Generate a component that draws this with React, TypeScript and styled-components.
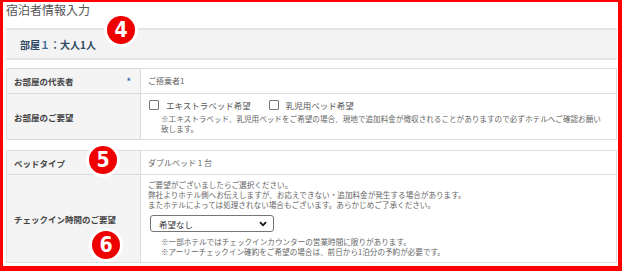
import React from 'react';
import styled, { createGlobalStyle } from 'styled-components';

const GlobalStyle = createGlobalStyle`
  html, body {
    margin: 0;
    padding: 0;
    background: #ffffff;
  }
  body {
    font-family: "Noto Sans CJK JP", "Noto Sans", sans-serif;
  }
`;

const Frame = styled.div`
  position: relative;
  box-sizing: border-box;
  width: 622px;
  height: 271px;
  border-style: solid;
  border-color: #ff0000;
  border-width: 2px 4px 5px 3px;
  padding: 1px 1px 0 3px;
  background: #ffffff;
  overflow: hidden;
`;

const Title = styled.div`
  font-size: 12px;
  line-height: 14px;
  color: #555555;
  margin-bottom: 11px;
`;

const RoomHeader = styled.div`
  box-sizing: border-box;
  height: 32px;
  display: flex;
  align-items: center;
  padding-left: 14px;
  background: #f3f3f3;
  border-top: 2px solid #e5e5e5;
  border-bottom: 2px solid #e5e5e5;
  font-size: 10px;
  font-weight: 700;
  color: #2f4a63;
`;

const RoomNo = styled.span`
  color: #3d6f9c;
`;

const Table = styled.div<{ $gap: number }>`
  margin-top: ${(p) => p.$gap}px;
  display: grid;
  grid-template-columns: 134px 1fr;
  border: 1px solid #dddddd;
  border-bottom: none;
`;

const Label = styled.div<{ $h: number }>`
  box-sizing: border-box;
  height: ${(p) => p.$h}px;
  display: flex;
  align-items: center;
  justify-content: space-between;
  padding: 0 9px 0 7px;
  background: #f4f4f4;
  border-right: 1px solid #dddddd;
  border-bottom: 1px solid #dddddd;
  font-size: 8.5px;
  font-weight: 700;
  color: #444444;
`;

const Required = styled.span`
  color: #3a6e9e;
  font-size: 9px;
`;

const Value = styled.div`
  box-sizing: border-box;
  display: flex;
  flex-direction: column;
  justify-content: center;
  padding: 0 8px 0 7px;
  border-bottom: 1px solid #dddddd;
  font-size: 8px;
  line-height: 10px;
  color: #666666;
`;

const CheckRow = styled.div`
  display: flex;
  align-items: center;
  gap: 17px;
  margin-bottom: 4px;
`;

const CheckItem = styled.label`
  display: flex;
  align-items: center;
  gap: 7px;
  font-size: 8.5px;
  color: #555555;
  margin-left: 1px;
`;

const Box = styled.span`
  box-sizing: border-box;
  width: 10px;
  height: 10px;
  border: 1px solid #777777;
  border-radius: 1px;
  background: #ffffff;
`;

const Note = styled.div<{ $indent: number }>`
  padding-left: ${(p) => p.$indent}px;
  font-size: 7.6px;
  line-height: 10px;
  color: #666666;
`;

const Select = styled.div`
  box-sizing: border-box;
  width: 124px;
  height: 17px;
  margin: 5px 0 5px 2px;
  display: flex;
  align-items: center;
  justify-content: space-between;
  padding: 0 6px 0 8px;
  border: 1px solid #767676;
  border-radius: 3px;
  background: #ffffff;
  font-size: 8.5px;
  color: #333333;
`;

// annotation markers sit over the form; x/y are page coordinates of the centre
const Badge = styled.div<{ $x: number; $y: number }>`
  position: absolute;
  left: ${(p) => p.$x - 3 - 17}px;
  top: ${(p) => p.$y - 2 - 17}px;
  width: 28px;
  height: 28px;
  border-radius: 50%;
  background: #ee0000;
  border: 3px solid #ffffff;
  display: flex;
  align-items: center;
  justify-content: center;
  color: #ffffff;
  font-family: "DejaVu Sans Condensed", "Liberation Sans", sans-serif;
  font-weight: 700;
  font-size: 21px;
  line-height: 1;
`;

const Chevron = () => (
  <svg width="8" height="6" viewBox="0 0 8 6">
    <path d="M1 1.2 L4 4.3 L7 1.2" fill="none" stroke="#111" strokeWidth="1.8" />
  </svg>
);

const App: React.FC = () => (
  <>
    <GlobalStyle />
    <Frame>
      <Title>宿泊者情報入力</Title>
      <RoomHeader>
        部屋<RoomNo>１</RoomNo>：大人1人
      </RoomHeader>

      <Table $gap={8}>
        <Label $h={25}>
          お部屋の代表者
          <Required>*</Required>
        </Label>
        <Value>ご搭乗者1</Value>

        <Label $h={46}>お部屋のご要望</Label>
        <Value>
          <CheckRow>
            <CheckItem>
              <Box />
              エキストラベッド希望
            </CheckItem>
            <CheckItem>
              <Box />
              乳児用ベッド希望
            </CheckItem>
          </CheckRow>
          <Note $indent={13}>
            ※エキストラベッド、乳児用ベッドをご希望の場合、現地で追加料金が徴収されることがありますので必ずホテルへご確認お願い致します。
          </Note>
        </Value>
      </Table>

      <Table $gap={10}>
        <Label $h={24}>ベッドタイプ</Label>
        <Value>ダブルベッド 1 台</Value>

        <Label $h={88}>チェックイン時間のご要望</Label>
        <Value>
          <Note $indent={0}>ご要望がございましたらご選択ください。</Note>
          <Note $indent={0}>
            弊社よりホテル側へお伝えしますが、お応えできない・追加料金が発生する場合があります。
          </Note>
          <Note $indent={0}>またホテルによっては処理されない場合もございます。あらかじめご了承ください。</Note>
          <Select>
            希望なし
            <Chevron />
          </Select>
          <Note $indent={13}>※一部ホテルではチェックインカウンターの営業時間に限りがあります。</Note>
          <Note $indent={13}>※アーリーチェックイン確約をご希望の場合は、前日から1泊分の予約が必要です。</Note>
        </Value>
      </Table>

      <Badge $x={121} $y={30}>4</Badge>
      <Badge $x={103} $y={160}>5</Badge>
      <Badge $x={106} $y={245}>6</Badge>
    </Frame>
  </>
);

export default App;
